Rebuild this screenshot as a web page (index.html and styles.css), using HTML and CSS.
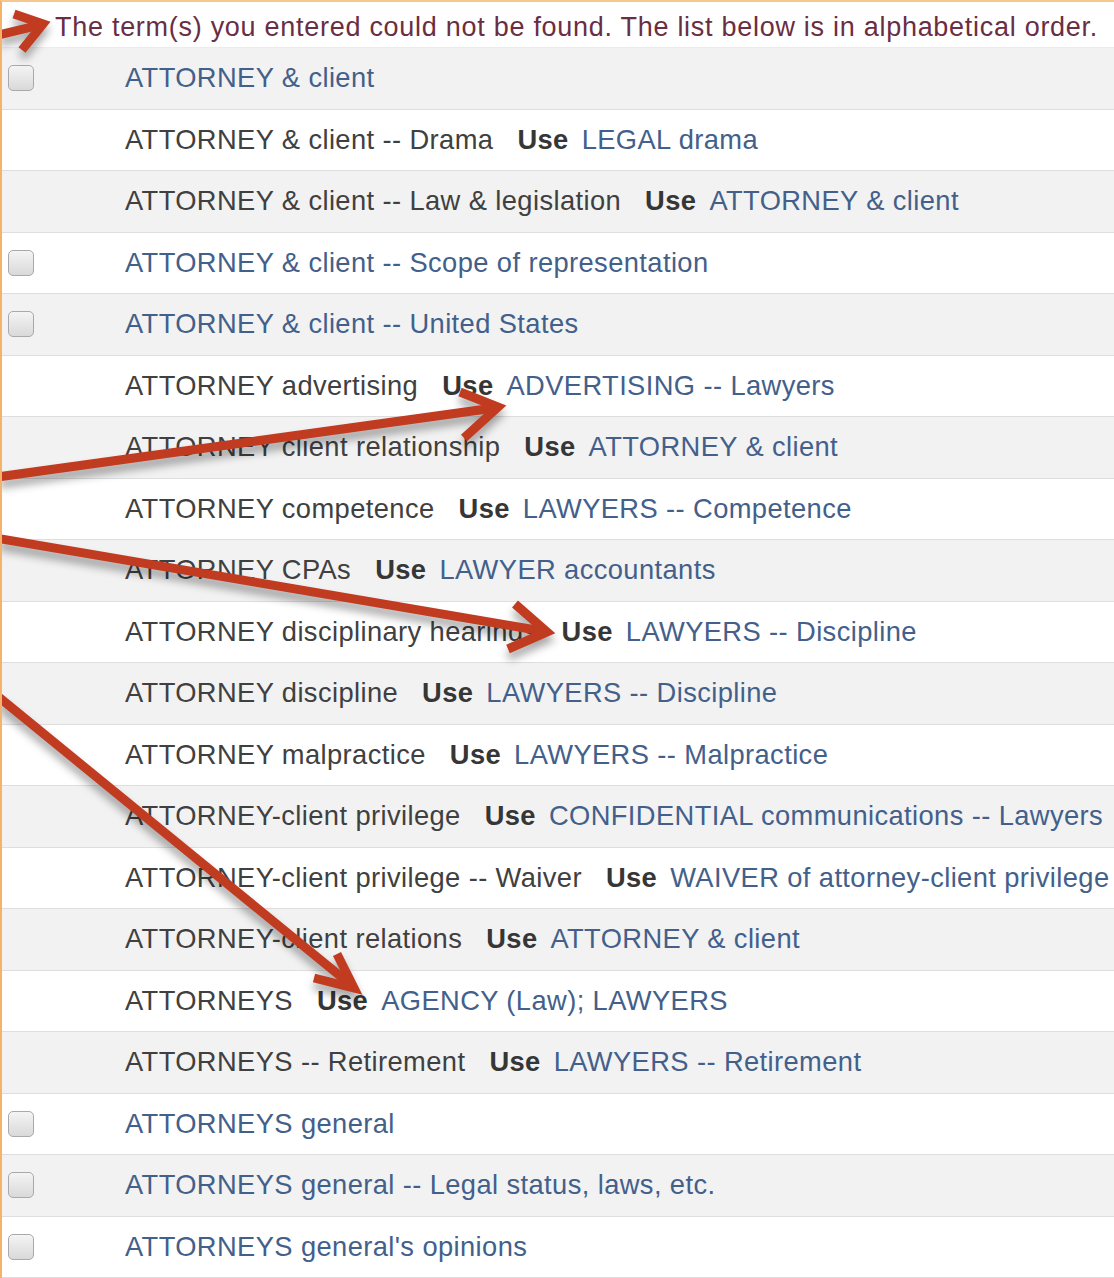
FILE: index.html
```html
<!DOCTYPE html>
<html>
<head>
<meta charset="utf-8">
<link rel="stylesheet" href="styles.css">
</head>
<body>
<div class="page">
  <div class="notice">The term(s) you entered could not be found. The list below is in alphabetical order.</div>
  <div class="list">
    <div class="row"><span class="cb"></span><span class="cell"><a class="link">ATTORNEY &amp; client</a></span></div>
    <div class="row"><span></span><span class="cell"><span class="term">ATTORNEY &amp; client -- Drama</span><b class="use">Use</b><a class="link">LEGAL drama</a></span></div>
    <div class="row"><span></span><span class="cell"><span class="term">ATTORNEY &amp; client -- Law &amp; legislation</span><b class="use">Use</b><a class="link">ATTORNEY &amp; client</a></span></div>
    <div class="row"><span class="cb"></span><span class="cell"><a class="link">ATTORNEY &amp; client -- Scope of representation</a></span></div>
    <div class="row"><span class="cb"></span><span class="cell"><a class="link">ATTORNEY &amp; client -- United States</a></span></div>
    <div class="row"><span></span><span class="cell"><span class="term">ATTORNEY advertising</span><b class="use">Use</b><a class="link">ADVERTISING -- Lawyers</a></span></div>
    <div class="row"><span></span><span class="cell"><span class="term">ATTORNEY client relationship</span><b class="use">Use</b><a class="link">ATTORNEY &amp; client</a></span></div>
    <div class="row"><span></span><span class="cell"><span class="term">ATTORNEY competence</span><b class="use">Use</b><a class="link">LAWYERS -- Competence</a></span></div>
    <div class="row"><span></span><span class="cell"><span class="term">ATTORNEY CPAs</span><b class="use">Use</b><a class="link">LAWYER accountants</a></span></div>
    <div class="row"><span></span><span class="cell"><span class="term">ATTORNEY disciplinary hearings</span><b class="use">Use</b><a class="link">LAWYERS -- Discipline</a></span></div>
    <div class="row"><span></span><span class="cell"><span class="term">ATTORNEY discipline</span><b class="use">Use</b><a class="link">LAWYERS -- Discipline</a></span></div>
    <div class="row"><span></span><span class="cell"><span class="term">ATTORNEY malpractice</span><b class="use">Use</b><a class="link">LAWYERS -- Malpractice</a></span></div>
    <div class="row"><span></span><span class="cell"><span class="term">ATTORNEY-client privilege</span><b class="use">Use</b><a class="link">CONFIDENTIAL communications -- Lawyers</a></span></div>
    <div class="row"><span></span><span class="cell"><span class="term">ATTORNEY-client privilege -- Waiver</span><b class="use">Use</b><a class="link">WAIVER of attorney-client privilege</a></span></div>
    <div class="row"><span></span><span class="cell"><span class="term">ATTORNEY-client relations</span><b class="use">Use</b><a class="link">ATTORNEY &amp; client</a></span></div>
    <div class="row"><span></span><span class="cell"><span class="term">ATTORNEYS</span><b class="use">Use</b><a class="link">AGENCY (Law); LAWYERS</a></span></div>
    <div class="row"><span></span><span class="cell"><span class="term">ATTORNEYS -- Retirement</span><b class="use">Use</b><a class="link">LAWYERS -- Retirement</a></span></div>
    <div class="row"><span class="cb"></span><span class="cell"><a class="link">ATTORNEYS general</a></span></div>
    <div class="row"><span class="cb"></span><span class="cell"><a class="link">ATTORNEYS general -- Legal status, laws, etc.</a></span></div>
    <div class="row"><span class="cb"></span><span class="cell"><a class="link">ATTORNEYS general's opinions</a></span></div>
  </div>
  <svg class="arrows" width="1114" height="1278" viewBox="0 0 1114 1278">
    <g fill="none" stroke="#c13b20" stroke-width="9" stroke-linejoin="miter" stroke-linecap="butt">
      <path d="M-30 42 L40 25"/>
      <path d="M14 14 L43 24 L22 50"/>
      <path d="M-10 478 L494 408"/>
      <path d="M460 392 L498 407 L464 438"/>
      <path d="M-10 537 L542 631"/>
      <path d="M515 604 L547 632 L508 649"/>
      <path d="M-10 690 L350 984"/>
      <path d="M337 954 L354 988 L314 978"/>
    </g>
  </svg>
</div>
</body>
</html>
```
FILE: styles.css
```css
html, body {
  margin: 0;
  padding: 0;
  background: #ffffff;
}

.page {
  position: relative;
  width: 1114px;
  height: 1278px;
  overflow: hidden;
  box-sizing: border-box;
  border-left: 2px solid #f4b26a;
  border-top: 2px solid #f6c88c;
  font-family: "Liberation Sans", Arial, sans-serif;
  font-size: 27.3px;
  letter-spacing: 0.4px;
  color: #404040;
}

.notice {
  height: 46px;
  box-sizing: border-box;
  padding-left: 53px;
  padding-top: 6px;
  display: flex;
  align-items: center;
  color: #6a2e44;
  font-size: 27px;
  letter-spacing: 0.72px;
  white-space: nowrap;
  border-bottom: 1px solid #ececec;
}

.list {
  display: flex;
  flex-direction: column;
}

.row {
  height: 61.5px;
  box-sizing: border-box;
  display: grid;
  grid-template-columns: 123px 1fr;
  align-items: center;
  border-bottom: 1.5px solid #dedede;
  white-space: nowrap;
}

.row:nth-child(odd) {
  background: #f2f2f3;
}

.cb {
  width: 26px;
  height: 26px;
  margin-left: 6px;
  box-sizing: border-box;
  border: 1.5px solid #a9a9a9;
  border-radius: 5px;
  background: linear-gradient(#f4f4f4, #d9d9d9);
}

.cell {
  display: flex;
  align-items: baseline;
}

.term {
  color: #404040;
  margin-right: 24px;
}

.use {
  font-weight: bold;
  color: #363636;
  margin-right: 13px;
}

.link {
  color: #43608a;
  text-decoration: none;
}

.arrows {
  position: absolute;
  left: -2px;
  top: -2px;
  pointer-events: none;
  filter: drop-shadow(0 7px 4px rgba(0, 0, 0, 0.35));
}
```
